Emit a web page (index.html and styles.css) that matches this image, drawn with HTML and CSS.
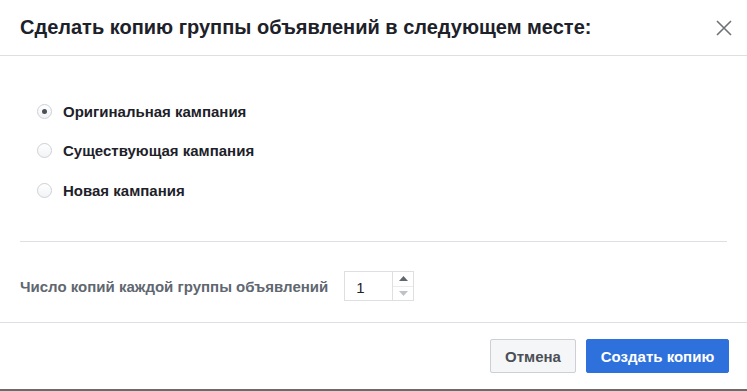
FILE: index.html
```html
<!DOCTYPE html>
<html lang="ru">
<head>
<meta charset="utf-8">
<link rel="stylesheet" href="styles.css">
</head>
<body>
<div class="dialog">
  <div class="header">
    <h1 class="title">Сделать копию группы объявлений в следующем месте:</h1>
    <button class="close" aria-label="Закрыть">
      <svg width="16" height="16" viewBox="0 0 16 16"><path d="M1 1 L15 15 M15 1 L1 15" stroke="#6d7278" stroke-width="1.6" fill="none"/></svg>
    </button>
  </div>
  <div class="body">
    <div class="options">
      <label class="option"><span class="radio checked"></span><span class="opt-label">Оригинальная кампания</span></label>
      <label class="option"><span class="radio"></span><span class="opt-label">Существующая кампания</span></label>
      <label class="option"><span class="radio"></span><span class="opt-label">Новая кампания</span></label>
    </div>
    <div class="count-row">
      <span class="count-label">Число копий каждой группы объявлений</span>
      <div class="spin">
        <span class="spin-value">1</span>
        <div class="spin-btns">
          <span class="spin-btn"><svg width="9" height="5" viewBox="0 0 9 5"><path d="M0 5 L4.5 0 L9 5 Z" fill="#606770"/></svg></span>
          <span class="spin-btn"><svg width="9" height="5" viewBox="0 0 9 5"><path d="M0 0 L4.5 5 L9 0 Z" fill="#bec3c9"/></svg></span>
        </div>
      </div>
    </div>
  </div>
  <div class="footer">
    <button class="btn btn-cancel">Отмена</button>
    <button class="btn btn-primary">Создать копию</button>
  </div>
</div>
</body>
</html>
```
FILE: styles.css
```css
* { box-sizing: border-box; }
html, body { margin: 0; padding: 0; background: #fff; }
body { font-family: "Liberation Sans", Arial, sans-serif; color: #1d2129; }
.dialog {
  width: 747px;
  height: 391px;
  display: flex;
  flex-direction: column;
  border-bottom: 2px solid #6b6b6b;
}
.header {
  height: 56px;
  border-bottom: 1px solid #dddfe2;
  display: flex;
  align-items: center;
  justify-content: space-between;
  padding: 0 15px 0 20px;
}
.title {
  margin: 0;
  font-size: 20px;
  font-weight: bold;
  color: #1d2129;
  letter-spacing: 0;
}
.close {
  border: 0;
  background: none;
  padding: 0;
  width: 16px;
  height: 16px;
  display: flex;
}
.body {
  flex: 1;
  padding: 0 20px;
  border-bottom: 1px solid #dddfe2;
}
.options {
  padding: 46px 0 42px 17px;
  border-bottom: 1px solid #dddfe2;
  display: flex;
  flex-direction: column;
  gap: 21.5px;
}
.option {
  display: flex;
  align-items: center;
  height: 18px;
  font-size: 15px;
  font-weight: bold;
  color: #1d2129;
}
.radio {
  width: 15px;
  height: 15px;
  border-radius: 50%;
  border: 1px solid #ccd0d5;
  background: linear-gradient(#fff, #f2f3f5);
  margin-right: 11px;
  display: flex;
  align-items: center;
  justify-content: center;
}
.radio.checked::after {
  content: "";
  width: 5px;
  height: 5px;
  border-radius: 50%;
  background: #4b4f56;
}
.count-row {
  display: flex;
  align-items: center;
  padding-top: 29px;
}
.count-label {
  font-size: 15px;
  font-weight: bold;
  color: #606770;
  margin-right: 16px;
}
.spin {
  width: 70px;
  height: 30px;
  border: 1px solid #dddfe2;
  display: flex;
  align-items: center;
  justify-content: space-between;
}
.spin-value {
  font-size: 15px;
  color: #1d2129;
  padding-left: 11px;
  padding-top: 3px;
}
.spin-btns {
  width: 21px;
  height: 100%;
  border-left: 1px solid #dddfe2;
  display: flex;
  flex-direction: column;
}
.spin-btn {
  flex: 1;
  display: flex;
  align-items: center;
  justify-content: center;
}
.spin-btn + .spin-btn { border-top: 1px solid #e9ebee; }
.footer {
  height: 66px;
  display: flex;
  justify-content: flex-end;
  align-items: center;
  gap: 10px;
  padding: 0 18px 0 0;
}
.btn {
  height: 34px;
  border-radius: 2px;
  font-family: "Liberation Sans", Arial, sans-serif;
  font-size: 15px;
  font-weight: bold;
  padding: 0;
  cursor: pointer;
}
.btn-cancel {
  width: 86px;
  background: #f5f6f7;
  border: 1px solid #ccd0d5;
  color: #4b4f56;
}
.btn-primary {
  width: 143px;
  background: #2f71dc;
  border: 1px solid #2f71dc;
  color: #fff;
}
```
